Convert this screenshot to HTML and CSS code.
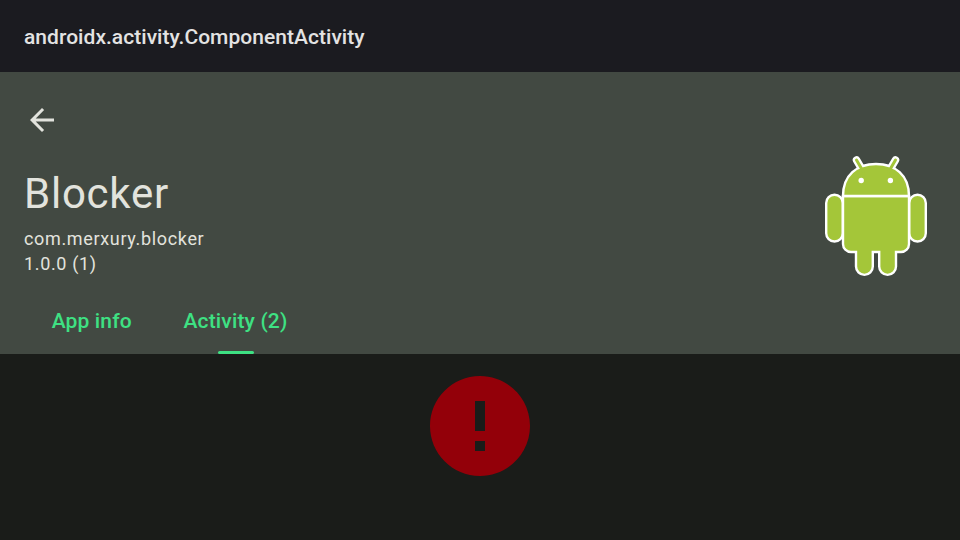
FILE: index.html
```html
<!DOCTYPE html>
<html lang="en">
<head>
<meta charset="utf-8">
<title>Blocker</title>
<link rel="stylesheet" href="styles.css">
</head>
<body>
<header class="action-bar">androidx.activity.ComponentActivity</header>
<section class="app-header">
  <svg class="back" viewBox="0 0 24 24" aria-label="Back"><path d="M20 11H7.83l5.59-5.59L12 4l-8 8 8 8 1.41-1.41L7.83 13H20v-2z"/></svg>
  <div class="summary">
    <div class="details">
      <h1 class="app-name">Blocker</h1>
      <p class="meta">com.merxury.blocker</p>
      <p class="meta">1.0.0 (1)</p>
    </div>
    <svg class="robot" viewBox="0 0 104 122">
      <g class="robot-outline">
        <path d="M32.5 5l7 12M71.5 5l-7 12"/>
      </g>
      <g class="robot-body">
        <rect x="2.2" y="39.7" width="16.6" height="46.8" rx="8.3"/>
        <rect x="85.2" y="39.7" width="16.6" height="46.8" rx="8.3"/>
        <path d="M19 41H85V89a8 8 0 0 1-8 8H72v14.5a8.4 8.4 0 0 1-16.8 0V97H48.8v14.5a8.4 8.4 0 0 1-16.8 0V97H27a8 8 0 0 1-8-8z"/>
        <path d="M19 41C19 20 33 9 52 9s33 11 33 32z"/>
      </g>
      <g class="robot-antenna"><path d="M32.5 5l7 12M71.5 5l-7 12"/></g>
      <g class="robot-eyes"><circle cx="37.2" cy="25.5" r="2.7"/><circle cx="66.4" cy="25.5" r="2.7"/></g>
    </svg>
  </div>
  <nav class="tabs"><a class="tab">App info</a><a class="tab selected">Activity (2)</a></nav>
</section>
<main class="content">
  <svg class="error" viewBox="2 2 20 20"><path d="M12 2C6.48 2 2 6.48 2 12s4.48 10 10 10 10-4.48 10-10S17.52 2 12 2zm1 15h-2v-2h2v2zm0-4h-2V7h2v6z"/></svg>
</main>
</body>
</html>
```
FILE: styles.css
```css
* { box-sizing: border-box; }
body {
  margin: 0;
  height: 540px;
  display: flex;
  flex-direction: column;
  background: #1a1c19;
  color: #e2e3dd;
  font-family: Roboto, sans-serif;
  overflow: hidden;
}
.action-bar {
  height: 72px;
  padding: 0 24px;
  background: #1b1b20;
  color: #e3e3e3;
  font-size: 21px;
  font-weight: 500;
  line-height: 74px;
  letter-spacing: 0.04px;
}
.app-header {
  height: 282px;
  background: #424942;
  display: flex;
  flex-direction: column;
}
.back {
  width: 36px;
  height: 36px;
  margin: 30px 0 0 24px;
  fill: #e2e3dd;
}
.summary {
  height: 150px;
  display: flex;
  justify-content: space-between;
  padding: 0 32px 0 24px;
}
.details { padding-top: 28px; }
.app-name {
  margin: 0 0 5px;
  font-size: 42px;
  font-weight: 400;
  line-height: 56px;
  letter-spacing: 0.75px;
}
.meta {
  margin: 0;
  font-size: 18px;
  line-height: 24px;
  letter-spacing: 0.66px;
}
.meta + .meta { line-height: 26px; }
.robot {
  width: 104px;
  height: 122px;
  margin-top: 17px;
}
.robot-outline { stroke: #fff; stroke-width: 7.5; stroke-linecap: round; }
.robot-antenna { stroke: #a4c639; stroke-width: 3; stroke-linecap: round; }
.robot-body { fill: #a4c639; stroke: #fff; stroke-width: 2.4; }
.robot-eyes { fill: #fff; }
.tabs {
  height: 66px;
  display: flex;
  margin-left: 24.7px;
}
.tab {
  padding: 0 27px;
  margin-right: -2.3px;
  font-size: 21px;
  font-weight: 500;
  line-height: 66px;
  letter-spacing: 0.15px;
  color: #3ee183;
}
.tab.selected { position: relative; }
.tab.selected::after {
  content: "";
  position: absolute;
  left: 61px;
  bottom: 0;
  width: 36px;
  height: 3px;
  border-radius: 2px;
  background: #3ee183;
}
.content {
  flex: 1;
  display: flex;
  justify-content: center;
  padding-top: 22px;
}
.error {
  width: 100px;
  height: 100px;
  fill: #930009;
}
```
